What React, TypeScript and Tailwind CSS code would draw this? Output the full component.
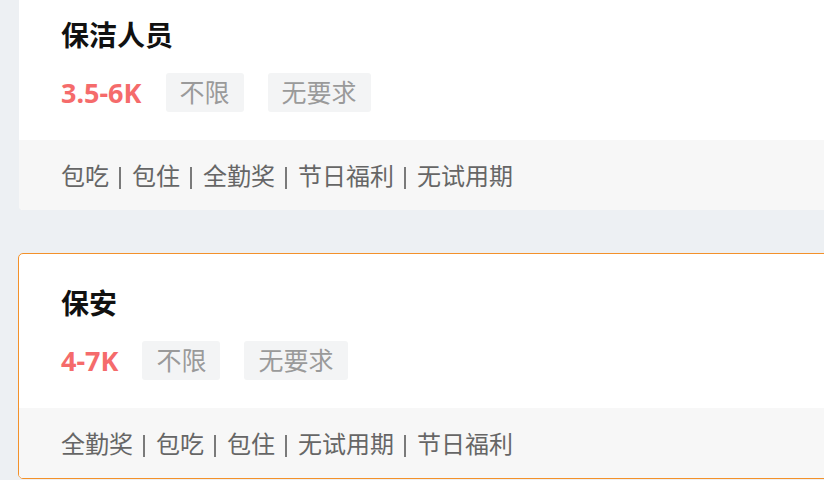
const jobs = [
  { title: '保洁人员', salary: '3.5-6K', tags: ['不限', '无要求'], perks: ['包吃', '包住', '全勤奖', '节日福利', '无试用期'], active: false },
  { title: '保安', salary: '4-7K', tags: ['不限', '无要求'], perks: ['全勤奖', '包吃', '包住', '无试用期', '节日福利'], active: true },
];

function JobCard({ job }: { job: (typeof jobs)[number] }) {
  return (
    <div
      className={`w-[900px] shrink-0 rounded-[5px] border overflow-hidden bg-white ${job.active ? 'border-[#f3912a]' : 'border-[#edf0f3]'}`}
    >
      <div className="pl-[42px] pt-[35px] pb-[28px]">
        <div className="text-[28px] leading-[28px] font-bold text-[#111]">{job.title}</div>
        <div className="flex items-center mt-[24px]">
          <span className="text-[27px] font-bold text-[#f56b6b] mr-[24px] leading-none">{job.salary}</span>
          {job.tags.map(t => (
            <span key={t} className="h-[39px] flex items-center px-[14px] mr-[24px] rounded-[3px] bg-[#f3f4f5] text-[25px] text-[#9a9a9a] leading-none">
              {t}
            </span>
          ))}
        </div>
      </div>
      <div className="h-[70px] bg-[#f7f7f7] pl-[42px] flex items-center text-[24px] text-[#666] pt-[2px]">
        {job.perks.map((p, i) => (
          <span key={p} className="flex items-center">
            {i > 0 && <span className="ml-[10px] mr-[11px] w-[2px] h-[22px] bg-[#7a7a7a] mt-[3px]" />}
            {p}
          </span>
        ))}
      </div>
    </div>
  );
}

export default function App() {
  return (
    <div
      className="w-[824px] h-[480px] overflow-hidden bg-[#edf0f3] pl-[18px]"
      style={{ fontFamily: '"Noto Sans", "Noto Sans CJK SC", sans-serif' }}
    >
      <div className="flex flex-col gap-[42px] -mt-[15px]">
        {jobs.map(j => (
          <JobCard key={j.title} job={j} />
        ))}
      </div>
    </div>
  );
}
